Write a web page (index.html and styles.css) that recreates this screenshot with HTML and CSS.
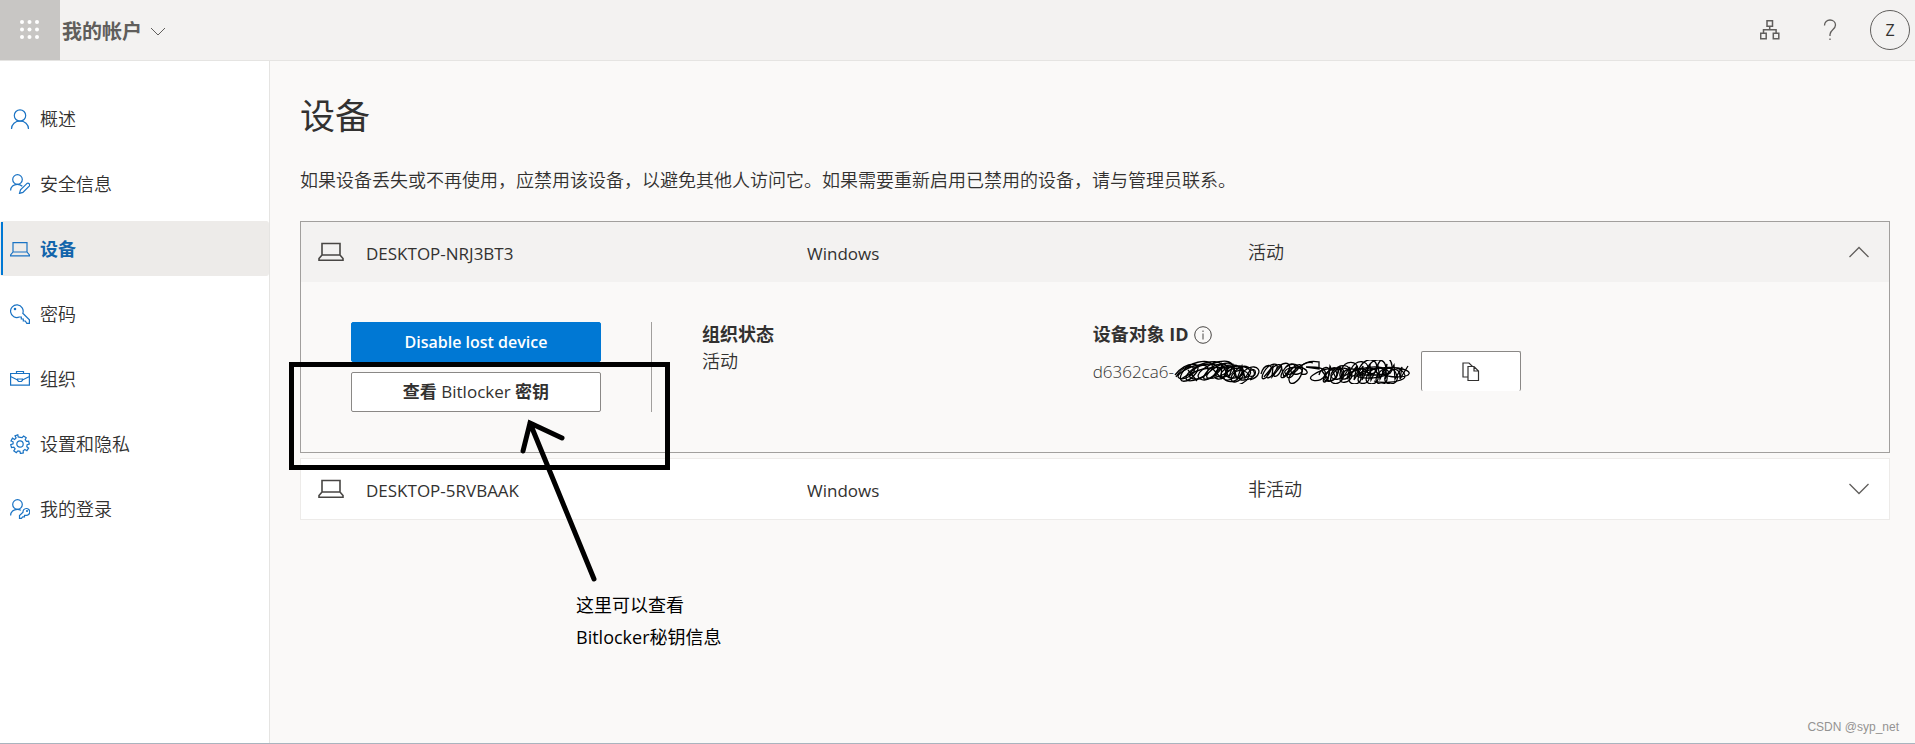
FILE: index.html
```html
<!DOCTYPE html>
<html lang="zh-CN">
<head>
<meta charset="utf-8">
<title>我的帐户 - 设备</title>
<link rel="stylesheet" href="styles.css">
</head>
<body>
<header class="topbar">
  <button class="waffle" aria-label="应用启动器">
    <svg width="20" height="20" viewBox="0 0 20 20" fill="currentColor"><circle cx="2" cy="2" r="2"/><circle cx="9.500" cy="2" r="2"/><circle cx="17" cy="2" r="2"/><circle cx="2" cy="9.500" r="2"/><circle cx="9.500" cy="9.500" r="2"/><circle cx="17" cy="9.500" r="2"/><circle cx="2" cy="17" r="2"/><circle cx="9.500" cy="17" r="2"/><circle cx="17" cy="17" r="2"/></svg>
  </button>
  <button class="brand">我的帐户
    <svg width="16" height="10" viewBox="0 0 16 10" fill="none" stroke="currentColor"><path d="M1 1l7 7 7-7"/></svg>
  </button>
  <div class="tools">
    <button class="tool" aria-label="组织">
      <svg width="20" height="20" viewBox="0 0 20 20" fill="none" stroke="currentColor" stroke-width="1.500"><path d="M7 .7h5.500v5.500H7zM.7 13.300h5.500v5.500H.7zM13.300 13.300h5.500v5.500h-5.500zM9.700 6.200v3.600M3.500 13.300V9.800h12.600v3.500"/></svg>
    </button>
    <button class="tool" aria-label="帮助">
      <svg width="14" height="22" viewBox="0 0 14 22" fill="none" stroke="currentColor" stroke-width="1.300"><path d="M1.500 6.500C1.500 3 4 1 7 1s5.500 2 5.500 5c0 4.500-5.500 5-5.500 9.500v1.500M7 19.500V21"/></svg>
    </button>
    <button class="avatar">Z</button>
  </div>
</header>
<div class="layout">
  <nav class="sidebar">
    <a class="item" href="#overview">
      <svg class="icon" viewBox="0 0 20 20"><circle cx="10" cy="6.500" r="5.700"/><path d="M1.500 20c0-4.700 3.800-8 8.500-8s8.500 3.300 8.500 8"/></svg>概述</a>
    <a class="item" href="#security">
      <svg class="icon" viewBox="0 0 20 20"><circle cx="7.500" cy="5.500" r="4.800"/><path d="M.6 16.500c0-3.600 3-6.200 6.700-6.200 2 0 3.700.7 5 1.900M9.500 19.400l1-3.600 6.300-6.200c1.700-1.200 3.700.7 2.400 2.500l-6.300 6.300z"/></svg>安全信息</a>
    <a class="item active" href="#devices" aria-current="page">
      <svg class="icon" viewBox="0 0 20 20"><path d="M3 13V3.600h14V13M3 13h14l2.400 3v.9H.6V16z"/></svg>设备</a>
    <a class="item" href="#password">
      <svg class="icon" viewBox="0 0 20 20"><path d="M12.800 9.300a6.300 6.300 0 1 0-3.500 3.700h2v2h2v2h2l1.500 2.400h2.600v-3.600z"/><circle cx="5" cy="5" r=".7"/></svg>密码</a>
    <a class="item" href="#organizations">
      <svg class="icon" viewBox="0 0 20 20"><path d="M.6 4.500h18.800v11.700H.6zM6.500 4.500v-2h7v2M.6 7.500l7 3.500M19.400 7.500l-7 3.500M7.600 10h4.800v1.500l-1 1H8.600l-1-1z"/></svg>组织</a>
    <a class="item" href="#privacy">
      <svg class="icon" viewBox="0 0 20 20"><circle cx="10" cy="10" r="3.200"/><path d="M8.200 2.900 7.800.8 5 1.900l1.100 2-1.500 1.500-2.100-1.200L1 7l2.100.8v2L.7 10.600l.8 2.900 2.300-.3 1.300 1.700-1.300 2 2.500 1.700 1.600-1.700 2 .4.5 2.200 2.900-.6-.1-2.200 1.700-1.200 2 1.200 1.700-2.500-1.800-1.500.3-2 2.200-.7-.7-2.900-2.200.2-1.200-1.600 1-2L13.600 2l-1.500 1.700-1.900-.4z"/></svg>设置和隐私</a>
    <a class="item" href="#signins">
      <svg class="icon" viewBox="0 0 20 20"><circle cx="7.500" cy="5.500" r="4.800"/><path d="M.6 16.500c0-3.600 3-6.200 6.700-6.200 1.400 0 2.500.3 3.600.9M13 13.300a3.400 3.400 0 1 1 3 3h-1.500v1.500h-1.800l-1.300 1.600H9.500v-2.800z"/><circle cx="17" cy="12" r=".5"/></svg>我的登录</a>
  </nav>
  <main class="main">
    <h1 class="title">设备</h1>
    <p class="intro">如果设备丢失或不再使用，应禁用该设备，以避免其他人访问它。如果需要重新启用已禁用的设备，请与管理员联系。</p>
    <section class="card open">
      <button class="row" aria-expanded="true">
        <svg class="laptop" viewBox="0 0 26 20"><path d="M4 13V1.500h18V13M4 13h18l3 3.500v1.800H1v-1.800z"/></svg>
        <span class="name">DESKTOP-NRJ3BT3</span><span class="os">Windows</span><span class="state">活动</span>
        <svg class="chevron" viewBox="0 0 20 12"><path d="M.5 11 10 1.500l9.500 9.500"/></svg>
      </button>
      <div class="details">
        <div class="actions">
          <button class="btn primary">Disable lost device</button>
          <button class="btn">查看 <span class="latin">Bitlocker</span> 密钥</button>
          <div class="callout">
            <div class="frame"></div>
            <svg class="arrow" width="80" height="168" viewBox="0 0 80 168"><path d="M10 6 74 162M3 34 10 6l32 15"/></svg>
            <p class="note">这里可以查看<br>Bitlocker秘钥信息</p>
          </div>
        </div>
        <div class="fields">
          <div class="field">
            <h2 class="label">组织状态</h2>
            <p class="value">活动</p>
          </div>
          <div class="identifier">
            <div class="field">
              <h2 class="label">设备对象 ID
                <svg class="info" viewBox="0 0 18 18"><circle cx="9" cy="9" r="8.300"/><path d="M9 7.500v6M9 4.500V6"/></svg>
              </h2>
              <p class="value">d6362ca6-<svg class="scribble" width="241" height="24" viewBox="0 0 241 24">
                <path d="M1 15C12 0 30 2 22 13S2 24 8 13 34-2 38 5 18 24 13 20 22 4 36 2s15 6 4 14-22 2-12-6S53-2 58 4 40 20 34 18 44 3 54 3s8 14-6 14-4-12 10-12 16 12 2 13-10-14 6-12 12 13 0 12-2-15 8-11 8 12-4 13 2-14 10-13 6 10-4 13"/>
                <path d="M2 17C8 6 18 4 20 9S10 21 5 18 16 5 28 5s4 16-8 14 2-15 16-15 6 13-3 15 2-14 14-15 6 16-3 15 4-15 13-12 2 17-7 12 4-15 14-12-1 18-11 14 6-17 14-11-6 15-9 11 3-13 12-10 4 11-6 14"/>
                <path d="M87 14c3-11 14-11 9-2s-11 9-6 0 17-11 12-2-13 11-7 2 15-10 12-2-11 9-5 0 16-9 13 0-12 11-6 1 14-9 12 0-13 9-5 0 14-8 12 1-12 16-13 8 18-20 24-17"/>
                <path d="M112 7c8-6 18-1 9 5s-15-1-5-4 17 4 8 6-10-8 0-7 13 9 3 7M127 6c8-7 17-4 18-4v7l-13-2c5 0 22-1 19 8s-21 6-12 0 23-10 24-1-18 10-12 1 20-8 18 2-17 8-11-2 20-8 20 0-16 11-11 1 19-9 20 1-16 9-11-1 17-10 19 0-15 10-10 0 17-11 19 0-16 10-11 0 18-12 20 0-15 10-10 0 17-11 20 0-17 10-11 0 14-8 14 1"/>
                <path d="M145 15c2-9 13-11 10 0s-10 8-2-2 15-4 9 4-15 2-8-5 19-5 15 3-17 4-10-4 18-7 17 2-14 8-9-3 16-9 17-1-13 11-7 0 17-8 17-1-14 9-8-1 16-9 17 0-14 9-9 0 16-10 18 0-14 10-9-1 14-10 15 0-6 8-10 9h-25"/>
                <path d="M148 11l6 8 2-13 6 12 4-12 2 13 8-12-3 12 10-13-3 14 9-14-1 14 8-15 1 15 7-14 2 13 7-15-2 15 9-14 1 14 7-12-2 12 8-13M38 8l9 10 1-14 7 13 4-12 4 14 5-13 3 12 6-9M90 17l9-11-1 11 9-11 3 11 7-10"/>
                <path d="M170 16c15-9 35-12 43-6s-18 10-28 7 22-12 39-9 13 9-1 9-20-7-8-9 20 8 14 11-20 5-29 2M7 19c16-10 28-13 47-11M14 10l9 11M75 12c8-8 9 7 0 4"/>
              </svg></p>
            </div>
            <button class="copy" aria-label="复制">
              <svg width="18" height="20" viewBox="0 0 18 20" fill="none" stroke="currentColor" stroke-width="1.200"><path d="M6 15H1V1h6l3.500 3.500M6 4.500h6l4.500 4.500v9.500H6zM12 4.500V9h4.500"/></svg>
            </button>
          </div>
        </div>
      </div>
    </section>
    <section class="card">
      <button class="row" aria-expanded="false">
        <svg class="laptop" viewBox="0 0 26 20"><path d="M4 13V1.500h18V13M4 13h18l3 3.500v1.800H1v-1.800z"/></svg>
        <span class="name">DESKTOP-5RVBAAK</span><span class="os">Windows</span><span class="state">非活动</span>
        <svg class="chevron" viewBox="0 0 20 12"><path d="M.5 1 10 10.500 19.500 1"/></svg>
      </button>
    </section>
    <p class="watermark">CSDN @syp_net</p>
  </main>
</div>
</body>
</html>
```
FILE: styles.css
```css
* { box-sizing: border-box; }
body {
  margin: 0;
  min-height: 100vh;
  display: flex;
  flex-direction: column;
  background: #faf9f8;
  border-bottom: 1px solid #a9b4be;
  color: #323130;
  font: 350 18px/28px "Open Sans", "Noto Sans CJK SC", sans-serif;
}
h1, h2, p { margin: 0; }
button { font: inherit; color: inherit; background: none; border: 0; padding: 0; }
svg { display: block; }

.topbar {
  display: flex;
  align-items: center;
  height: 61px;
  background: #f3f2f1;
  border-bottom: 1px solid #e5e4e2;
}
.waffle {
  display: flex;
  align-items: center;
  justify-content: center;
  width: 60px;
  height: 60px;
  background: #c8c6c4;
  color: #fff;
}
.brand {
  display: flex;
  align-items: center;
  gap: 8px;
  padding: 4px 0 0 2px;
  color: #605e5c;
  font-size: 20px;
  font-weight: 700;
}
.tools { display: flex; align-items: center; margin-left: auto; padding-right: 5px; }
.tool {
  display: flex;
  align-items: center;
  justify-content: center;
  width: 60px;
  height: 60px;
  color: #605e5c;
}
.avatar {
  width: 40px;
  height: 40px;
  margin-left: 10px;
  border: 1px solid #605e5c;
  border-radius: 50%;
  font-size: 16px;
  font-weight: 400;
}

.layout { display: flex; flex: 1; }
.sidebar {
  display: flex;
  flex-direction: column;
  gap: 10px;
  width: 270px;
  padding-top: 30px;
  background: #fff;
  border-right: 1px solid #e5e4e2;
}
.item {
  display: flex;
  align-items: center;
  gap: 10px;
  height: 55px;
  padding-left: 10px;
  border-radius: 3px;
  color: #323130;
  text-decoration: none;
}
.item.active {
  background: linear-gradient(#0078d4, #0078d4) 1px 1px / 2px 53px no-repeat #edebe9;
  color: #1264ab;
  font-weight: 700;
}
.icon { width: 20px; height: 20px; fill: none; stroke: #1a73c4; stroke-width: 1.2; }

.main { display: flex; flex-direction: column; flex: 1; padding: 30px 25px 0 30px; }
.title { font-size: 35px; line-height: 50px; font-weight: 400; }
.intro { padding: 25px 0 27px; }
.card { margin-bottom: 5px; background: #fff; border: 1px solid #edebe9; }
.card.open { background: #faf9f8; border-color: #a19f9d; }
.row {
  display: grid;
  grid-template-columns: 65px 1fr 1fr 1fr 200px;
  align-items: center;
  width: 100%;
  height: 60px;
  text-align: left;
}
.open .row { background: #f3f2f1; }
.laptop { width: 26px; height: 20px; margin-left: 17px; fill: none; stroke: #484644; stroke-width: 1.6; }
.name, .os { font-size: 17px; font-weight: 400; padding-top: 4px; }
.chevron { width: 20px; height: 12px; margin-right: 20px; justify-self: end; fill: none; stroke: #605e5c; stroke-width: 1.3; }

.details { display: flex; padding: 40px 15px 40px 50px; }
.actions { position: relative; display: flex; flex-direction: column; gap: 10px; width: 250px; }
.btn {
  height: 40px;
  background: #fff;
  border: 1px solid #8a8886;
  border-radius: 2px;
  font-size: 17px;
  font-weight: 700;
}
.latin { font-weight: 400; }
.btn.primary { background: #0078d4; border-color: #0078d4; color: #fff; font-size: 16px; font-weight: 600; }
.fields {
  display: grid;
  grid-template-columns: 1fr 2fr;
  flex: 1;
  height: 90px;
  margin-left: 50px;
  padding-left: 50px;
  border-left: 1px solid #a19f9d;
}
.label { display: flex; align-items: center; gap: 5px; font-size: 18px; font-weight: 700; line-height: 25px; }
.value { display: flex; align-items: center; }
.info { width: 18px; height: 18px; fill: none; stroke: #484644; }
.identifier { display: flex; align-items: flex-start; gap: 6px; }
.identifier .value { padding-top: 11px; font-size: 17px; }
.scribble { fill: none; stroke: #000; stroke-width: 1.3; }
.copy {
  display: flex;
  align-items: center;
  justify-content: center;
  width: 100px;
  height: 40px;
  margin-top: 29px;
  background: #fff;
  border: 1px solid #8a8886;
  border-bottom: 0;
  border-radius: 2px;
}

/* Hand-drawn callout, lies over the cards */
.callout { position: absolute; top: 40px; left: -62px; width: 381px; color: #000; pointer-events: none; }
.frame { height: 108px; border: 5px solid #000; }
.arrow { position: absolute; top: 55px; left: 231px; fill: none; stroke: #000; stroke-width: 5; stroke-linecap: round; }
.note { position: absolute; top: 227px; left: 287px; line-height: 32px; white-space: nowrap; font-weight: 400; }

.watermark { margin: auto -9px 6px auto; color: #949392; font: 12px/20px "Liberation Sans", Arial, sans-serif; }
```
